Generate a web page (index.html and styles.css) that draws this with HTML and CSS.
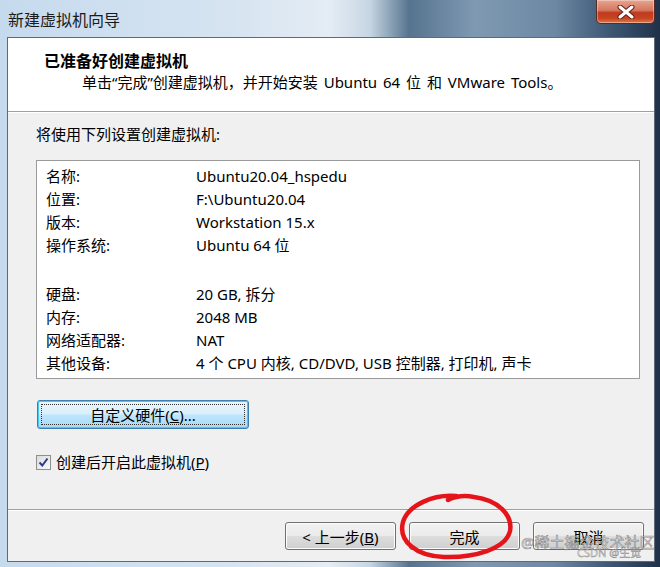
FILE: index.html
```html
<!DOCTYPE html>
<html lang="zh-CN">
<head>
<meta charset="utf-8">
<title>新建虚拟机向导</title>
<link rel="stylesheet" href="styles.css">
</head>
<body>
<div class="window">
  <div class="titlebar">
    <span class="title">新建虚拟机向导</span>
    <div class="close"><svg width="20" height="14" viewBox="0 0 20 14"><path d="M4 2 L16 12 M16 2 L4 12" stroke="#6a1a12" stroke-width="5" stroke-linecap="round"/><path d="M4 2 L16 12 M16 2 L4 12" stroke="#ffffff" stroke-width="3" stroke-linecap="round"/></svg></div>
  </div>
  <div class="client">
    <div class="header">
      <div class="h-title">已准备好创建虚拟机</div>
      <div class="h-sub">单击“完成”创建虚拟机，并开始安装 Ubuntu 64 位 和 VMware Tools。</div>
    </div>
    <div class="body">
      <div class="intro">将使用下列设置创建虚拟机:</div>
      <div class="list">
        <div class="row"><span>名称:</span><span>Ubuntu20.04_hspedu</span></div>
        <div class="row"><span>位置:</span><span>F:\Ubuntu20.04</span></div>
        <div class="row"><span>版本:</span><span>Workstation 15.x</span></div>
        <div class="row"><span>操作系统:</span><span>Ubuntu 64 位</span></div>
        <div class="spacer"></div>
        <div class="row"><span>硬盘:</span><span>20 GB, 拆分</span></div>
        <div class="row"><span>内存:</span><span>2048 MB</span></div>
        <div class="row"><span>网络适配器:</span><span>NAT</span></div>
        <div class="row"><span>其他设备:</span><span>4 个 CPU 内核, CD/DVD, USB 控制器, 打印机, 声卡</span></div>
      </div>
      <div class="btn custom"><span class="focus"><span>自定义硬件(<u>C</u>)...</span></span></div>
      <label class="check"><span class="box"><svg width="11" height="11" viewBox="0 0 11 11"><path d="M1.5 5.5 L4.3 8.5 L9.5 1.5" fill="none" stroke="#2d3a8c" stroke-width="2"/></svg></span><span>创建后开启此虚拟机(<u>P</u>)</span></label>
    </div>
    <div class="footer">
      <div class="btn nav"><span>&lt; 上一步(<u>B</u>)</span></div>
      <div class="btn nav"><span>完成</span></div>
      <div class="btn nav"><span>取消</span></div>
    </div>
  </div>
  <svg class="circle" width="130" height="75" viewBox="0 0 130 75"><path d="M62 5 C40 3 14 14 9 31 C4 50 22 65 50 66 C80 67 112 58 116 40 C119 24 104 9 80 6 C70 4 62 5 54 9" fill="none" stroke="#e5141b" stroke-width="4.5" stroke-linecap="round"/></svg>
  <div class="wm1">@稀土掘金技术社区</div>
  <div class="wm2">CSDN @生觉</div>
</div>
</body>
</html>
```
FILE: styles.css
```css
html, body {
  margin: 0;
  padding: 0;
}
body {
  width: 660px;
  height: 567px;
  overflow: hidden;
  font-family: "Noto Sans", "Noto Sans CJK SC", sans-serif;
  color: #000;
}
.window {
  position: relative;
  width: 660px;
  height: 567px;
  box-sizing: border-box;
  padding: 0 5px 5px 7px;
  display: flex;
  flex-direction: column;
  background: linear-gradient(to right, #c6daee 0%, #d6e4f1 35%, #e4ecf4 50%, #c7d6e4 56%, #56748f 62%, #7f99b2 72%, #6d88a3 84%, #3f5a76 92%, #1f3149 100%);
}
.titlebar {
  height: 37px;
  display: flex;
  align-items: flex-start;
  justify-content: space-between;
  flex-shrink: 0;
}
.title {
  font-family: "Noto Sans CJK SC", sans-serif;
  font-size: 16px;
  line-height: 18px;
  margin-top: 10px;
  margin-left: 1px;
  color: #1a1a1a;
}
.close {
  width: 59px;
  height: 24px;
  box-sizing: border-box;
  border: 1px solid #5a2a28;
  border-top: none;
  border-radius: 0 0 5px 5px;
  background: linear-gradient(to bottom, #e8a590 0%, #d4775f 45%, #c1391f 55%, #c6451f 80%, #de7a4f 100%);
  display: flex;
  align-items: center;
  justify-content: center;
  box-shadow: inset 0 0 0 1px rgba(255,255,255,0.35);
}
.client {
  flex: 1;
  border: 1px solid #5e6a78;
  background: #f0f0f0;
  display: flex;
  flex-direction: column;
  min-height: 0;
}
.header {
  height: 74px;
  flex-shrink: 0;
  background: #fff;
  border-bottom: 1px solid #a0a0a0;
  box-shadow: 0 1px 0 #fff;
  box-sizing: border-box;
  padding: 12px 0 0 36px;
}
.h-title {
  font-weight: bold;
  font-size: 16px;
  line-height: 20px;
  font-family: "Noto Sans CJK SC", sans-serif;
}
.h-sub {
  font-size: 15px;
  line-height: 20px;
  margin-top: 2px;
  padding-left: 38px;
  word-spacing: 2px;
}
.body {
  flex: 1;
  padding: 12px 0 0 28px;
}
.intro {
  font-size: 15px;
  line-height: 20px;
}
.list {
  margin-top: 16px;
  width: 604px;
  height: 219px;
  box-sizing: border-box;
  background: #fff;
  border: 1px solid #9a9a9a;
  padding: 4px 0 0 9px;
}
.row {
  display: grid;
  grid-template-columns: 150px auto;
  font-size: 15px;
  line-height: 23px;
  height: 23px;
}
.spacer {
  height: 26px;
}
.btn {
  box-sizing: border-box;
  border: 1px solid #707070;
  border-radius: 3px;
  background: linear-gradient(to bottom, #f2f2f2 0%, #ebebeb 48%, #dddddd 52%, #cfcfcf 100%);
  box-shadow: inset 0 0 0 1px #fcfcfc;
  display: flex;
  align-items: center;
  justify-content: center;
  font-size: 15px;
}
.custom {
  margin-top: 21px;
  margin-left: 1px;
  width: 212px;
  height: 29px;
  border-color: #3c7fb1;
  background: linear-gradient(to bottom, #eaf6fd 0%, #d9f0fc 48%, #bee6fd 52%, #a7d9f5 100%);
  box-shadow: inset 0 0 0 1px #48c6f4;
  padding: 3px;
}
.focus {
  flex: 1;
  align-self: stretch;
  display: flex;
  align-items: center;
  justify-content: center;
  outline: 1px dotted #333;
  outline-offset: -1px;
}
.check {
  display: flex;
  align-items: center;
  gap: 5px;
  margin-top: 24px;
  font-size: 15px;
  line-height: 18px;
}
.box {
  width: 13px;
  height: 13px;
  border: 1px solid #8e8f8f;
  background: linear-gradient(135deg, #dcdcdc, #fafafa);
  display: flex;
  align-items: center;
  justify-content: center;
}
.footer {
  height: 52px;
  flex-shrink: 0;
  box-sizing: border-box;
  border-top: 1px solid #a0a0a0;
  box-shadow: inset 0 1px 0 #fff;
  display: flex;
  justify-content: flex-end;
  align-items: flex-start;
  gap: 13px;
  padding: 12px 10px 0 0;
}
.nav {
  width: 111px;
  height: 28px;
}
.circle {
  position: absolute;
  left: 394px;
  top: 491px;
}
.wm1 {
  position: absolute;
  left: 521px;
  top: 532px;
  font-size: 15px;
  line-height: 20px;
  color: rgba(255,255,255,0.55);
  -webkit-text-stroke: 0.6px rgba(90,90,90,0.7);
}
.wm2 {
  position: absolute;
  left: 577px;
  top: 546px;
  font-size: 11px;
  line-height: 13px;
  color: rgba(255,255,255,0.6);
  -webkit-text-stroke: 0.5px rgba(90,90,90,0.7);
}
```
